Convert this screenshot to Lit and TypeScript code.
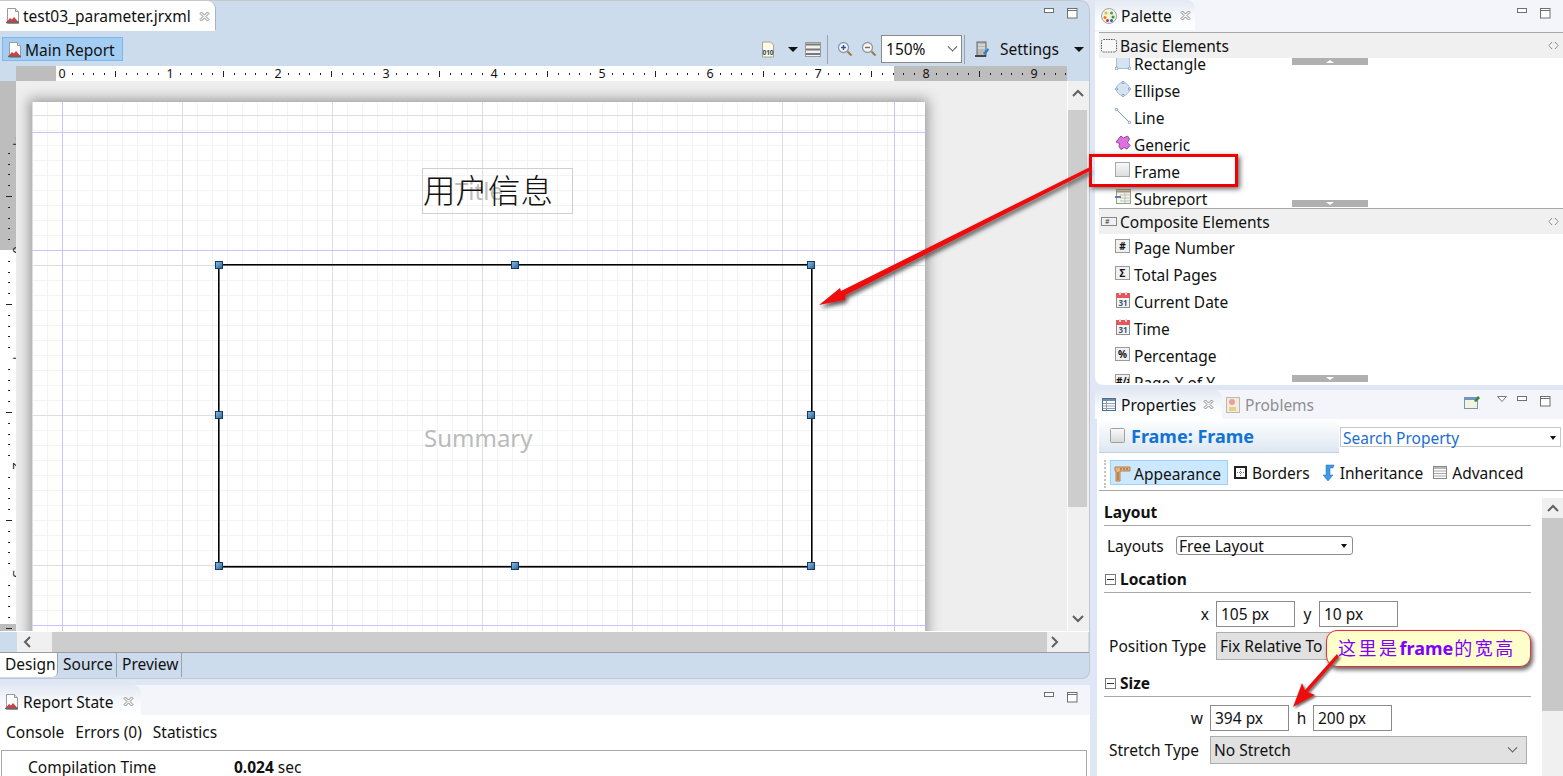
import { LitElement, css, html, svg } from 'lit';
import { customElement } from 'lit/decorators.js';

const reportIcon = () => html`<svg class="ic" width="16" height="18" viewBox="0 0 16 18">
  <path d="M2.500 1.500h8l3 3v12h-11z" fill="#fdfdfd" stroke="#9a9a9a"/>
  <path d="M10.500 1.500v3h3" fill="#ddd" stroke="#9a9a9a"/>
  <path d="M1.500 15l3.500-4 2 1.500 2-2.500 4.500 5z" fill="#c8424a"/>
  <path d="M1 15.500h13" stroke="#666" stroke-width="1.400"/>
</svg>`;

const closeIcon = () => html`<svg class="ic" width="11" height="11" viewBox="0 0 11 11">
  <path d="M1 2.500L2.500 1 5.500 4 8.500 1 10 2.500 7 5.500 10 8.500 8.500 10 5.500 7 2.500 10 1 8.500 4 5.500z" fill="#f4f4f4" stroke="#8a8a8a"/>
</svg>`;

const minMax = () => html`<div class="minmax">
  <svg width="11" height="6" viewBox="0 0 11 6"><rect x=".5" y=".5" width="9" height="4" fill="#fff" stroke="#6f6f6f"/></svg>
  <svg width="11" height="11" viewBox="0 0 11 11"><rect x=".5" y=".5" width="9.500" height="9.500" fill="#fff" stroke="#6f6f6f"/><path d="M1 2.500h9" stroke="#6f6f6f"/></svg>
</div>`;

const zoomIcon = (plus: boolean) => html`<svg class="ic" width="16" height="16" viewBox="0 0 16 16">
  <circle cx="6.500" cy="6.500" r="5" fill="#f2f6fa" stroke="#8e9aa5" stroke-width="1.300"/>
  <path d="M10.500 10.500l4 4" stroke="#9c7a4c" stroke-width="2"/>
  <path d=${plus ? 'M4 6.500h5M6.500 4v5' : 'M4 6.500h5'} stroke=${plus ? '#2e52a8' : '#a3602e'} stroke-width="1.400"/>
</svg>`;

const rulerH = () => {
  const parts = [];
  for (let n = 0; n < 10; n++) {
    const x0 = 45 + n * 108;
    for (let t = 1; t < 10; t++) {
      const x = Math.round(x0 + t * 10.8) + 0.5;
      parts.push(t === 5
        ? svg`<path d="M${x} 5v6" stroke="#222"/>`
        : svg`<path d="M${x} 7v2" stroke="#222"/>`);
    }
    parts.push(svg`<rect x=${x0 - 5} y="0" width="11" height="15" fill=${n > 7 ? 'none' : '#fff'}/>`);
    parts.push(svg`<text x=${x0 + 1} y="11.500" text-anchor="middle" font-size="12.500" fill="#111">${n}</text>`);
  }
  return parts;
};

const rulerV = () => {
  const parts = [];
  for (let n = -1; n < 4; n++) {
    const y0 = 169 + n * 108;
    for (let t = 1; t < 10; t++) {
      const y = Math.round(y0 + t * 10.8) + 0.5;
      parts.push(t === 5
        ? svg`<path d="M6 ${y}h6" stroke="#222"/>`
        : svg`<path d="M8 ${y}h2" stroke="#222"/>`);
    }
    parts.push(svg`<text transform="translate(13 ${y0}) rotate(90)" text-anchor="middle" font-size="13" fill="#223">${n}</text>`);
  }
  return parts;
};

const paletteBasic = [
  { name: 'Rectangle', icon: 'rect' },
  { name: 'Ellipse', icon: 'ellipse' },
  { name: 'Line', icon: 'line' },
  { name: 'Generic', icon: 'generic' },
  { name: 'Frame', icon: 'frame' },
  { name: 'Subreport', icon: 'sub' },
];

const paletteComposite = [
  { name: 'Page Number', icon: '#' },
  { name: 'Total Pages', icon: 'Σ' },
  { name: 'Current Date', icon: 'cal' },
  { name: 'Time', icon: 'cal' },
  { name: 'Percentage', icon: '%' },
  { name: 'Page X of Y', icon: '#/#' },
];

const palIcon = (k: string) => {
  switch (k) {
    case 'rect':
      return html`<svg width="16" height="16" viewBox="0 0 16 16"><rect x="1.500" y="1.500" width="13" height="13" fill="#d6e3f2" stroke="#a9bfd8"/><circle cx="1.500" cy="14.500" r="1.300" fill="#fff" stroke="#7a99bd"/><circle cx="14.500" cy="14.500" r="1.300" fill="#fff" stroke="#7a99bd"/></svg>`;
    case 'ellipse':
      return html`<svg width="16" height="16" viewBox="0 0 16 16"><circle cx="8" cy="8" r="6.500" fill="#d6e3f2" stroke="#a9bfd8"/><circle cx="8" cy="1.500" r="1.100" fill="#fff" stroke="#7a99bd"/><circle cx="1.500" cy="8" r="1.100" fill="#fff" stroke="#7a99bd"/><circle cx="14.500" cy="8" r="1.100" fill="#fff" stroke="#7a99bd"/><circle cx="8" cy="14.500" r="1.100" fill="#fff" stroke="#7a99bd"/></svg>`;
    case 'line':
      return html`<svg width="16" height="16" viewBox="0 0 16 16"><path d="M1.500 1.500l13 13" stroke="#7a99bd"/><circle cx="1.500" cy="1.500" r="1.200" fill="#fff" stroke="#7a99bd"/><circle cx="14.500" cy="14.500" r="1.200" fill="#fff" stroke="#7a99bd"/></svg>`;
    case 'generic':
      return html`<svg width="16" height="16" viewBox="0 0 16 16"><path d="M6 1l2.500 2 4-2 2 3-2 3.500 2.500 3-3 3.500-3-1.500-3 2-2-3 .5-3L1 7l2-2.500z" fill="#e070e0" stroke="#8a4d8a"/></svg>`;
    case 'frame':
      return html`<svg width="16" height="16" viewBox="0 0 16 16"><defs><linearGradient id="fg" x1="0" y1="0" x2="0" y2="1"><stop offset="0" stop-color="#fafafa"/><stop offset="1" stop-color="#dcdcdc"/></linearGradient></defs><rect x=".5" y=".5" width="14" height="14" fill="url(#fg)" stroke="#a8a8a8"/></svg>`;
    case 'sub':
      return html`<svg width="16" height="16" viewBox="0 0 16 16"><rect x="1.500" y=".5" width="14" height="14" fill="#f6f6ee" stroke="#8fa08f"/><path d="M2 2.500h13" stroke="#b39a70" stroke-width="2"/><path d="M5 6h10M5 9h10M5 12h10M10 4v10" stroke="#b9c4b9"/><path d="M0 8h6" stroke="#5c7fa8" stroke-width="2"/></svg>`;
    case 'cal':
      return html`<svg width="16" height="17" viewBox="0 0 16 17"><rect x="1.500" y="1.500" width="13" height="14" fill="#f4f4f4" stroke="#8c8c8c"/><rect x="1" y="1" width="14" height="5" fill="#e8545a"/><rect x="4" y="0" width="2" height="3" fill="#ddd"/><rect x="10" y="0" width="2" height="3" fill="#ddd"/><text x="8" y="14" text-anchor="middle" font-size="8" font-weight="700" fill="#39566e">31</text></svg>`;
    default:
      return html`<span class="keyicon">${k}</span>`;
  }
};

@customElement('app-root')
export class AppRoot extends LitElement {
  static styles = css`
    :host {
      display: flex;
      width: 1563px;
      height: 776px;
      overflow: hidden;
      position: relative;
      background: #dfe6f5;
      font-family: 'Noto Sans', 'Noto Sans CJK SC', sans-serif;
      font-size: 15.500px;
      color: #111;
      line-height: 20px;
    }
    .ic { flex: none; display: block; }
    svg text { font-family: 'Noto Sans', sans-serif; }

    .left { width: 1090px; flex: none; display: flex; flex-direction: column; }
    .right { width: 466px; margin-left: 7px; flex: none; display: flex; flex-direction: column; }

    /* editor */
    .editor {
      height: 679px;
      flex: none;
      background: #cddcec;
      border-top: 1px solid #c4c8cc;
      border-right: 1px solid #c2c6cc;
      border-bottom: 1px solid #c2c6cc;
      border-radius: 0 10px 8px 0;
      display: flex;
      flex-direction: column;
      box-sizing: border-box;
    }
    .tabbar { height: 31px; flex: none; display: flex; align-items: flex-start; position: relative; }
    .editor-tab {
      width: 216px;
      height: 30px;
      background: #fff;
      border-right: 1px solid #a9b5c2;
      border-bottom: 1px solid #fff;
      border-radius: 0 8px 0 0;
      box-sizing: border-box;
      display: flex;
      align-items: center;
      padding: 1px 0 0 5px;
      gap: 2px;
    }
    .editor-tab .ic:last-child { margin-left: 6px; }
    .tabbar .minmax { margin-left: auto; margin-right: 11px; margin-top: 7px; }
    .minmax { display: flex; align-items: flex-start; gap: 12px; }

    .toolbar { height: 34px; flex: none; display: flex; align-items: center; position: relative; }
    .main-btn {
      margin-left: 2px;
      width: 121px;
      height: 24px;
      background: #a3cdf3;
      border: 1px solid #7ab8ee;
      box-sizing: border-box;
      display: flex;
      align-items: center;
      padding: 1px 0 0 4px;
      gap: 2px;
    }
    .tools { margin-left: auto; display: flex; align-items: center; height: 100%; padding-right: 4px; }
    .sep { width: 1px; height: 29px; background: #9aa3ad; }
    .sp { display: block; flex: none; }
    .ddrop { display: block; width: 0; height: 0; border: 5px solid transparent; border-top: 5px solid #111; border-bottom: 0; }
    .combo150 {
      width: 81px;
      height: 28px;
      box-sizing: border-box;
      background: #fff;
      border: 1px solid #8a8a8a;
      display: flex;
      align-items: center;
      padding: 0 5px 0 4px;
      justify-content: space-between;
    }
    .chev { width: 6px; height: 6px; border-right: 1px solid #555; border-bottom: 1px solid #555; transform: rotate(45deg) translate(-2px, -2px); }

    .ruler-row { height: 15px; flex: none; display: flex; }
    .ruler-row svg { display: block; margin-left: 16px; background: #fff; }

    .work { flex: 1; min-height: 0; display: flex; }
    .vruler { width: 16px; flex: none; background: #fff; }
    .vruler svg { display: block; }
    .canvas { width: 1051px; flex: none; position: relative; overflow: hidden; background: #eeeeee; }
    .page {
      position: absolute;
      left: 16px;
      top: 21px;
      width: 893px;
      height: 560px;
      box-shadow: 0 0 12px 3px #9a9a9a;
      background-color: #fff;
      background-image:
        linear-gradient(#c4c4ff, #c4c4ff), linear-gradient(#c4c4ff, #c4c4ff),
        linear-gradient(#c4c4ff, #c4c4ff), linear-gradient(#c4c4ff, #c4c4ff),
        linear-gradient(#c4c4ff, #c4c4ff),
        linear-gradient(90deg, #dedede 1px, transparent 1px),
        linear-gradient(#dedede 1px, transparent 1px),
        linear-gradient(90deg, #f3f3f3 1px, transparent 1px),
        linear-gradient(#f3f3f3 1px, transparent 1px);
      background-size: 1px 100%, 1px 100%, 100% 1px, 100% 1px, 100% 1px, 150px 100%, 100% 150px, 15px 100%, 100% 15px;
      background-position: 30px 0, 862px 0, 0 30px, 0 148px, 0 523px, 0 0, 0 13px, 0 0, 0 13px;
      background-repeat: no-repeat, no-repeat, no-repeat, no-repeat, no-repeat, repeat-x, repeat-y, repeat-x, repeat-y;
    }
    .title-box {
      position: absolute;
      left: 390px;
      top: 66px;
      width: 151px;
      height: 46px;
      border: 1px solid #cfcfcf;
      box-sizing: border-box;
    }
    .title-ghost { position: absolute; left: 32px; top: 6px; font-size: 24px; line-height: 32px; color: #bdbdbd; }
    .title-cn {
      position: absolute;
      left: 0;
      top: -2px;
      font-size: 32.500px;
      line-height: 44px;
      color: #111;
      font-weight: 300;
      font-family: 'Noto Sans CJK SC', sans-serif;
      white-space: nowrap;
    }
    .summary { position: absolute; left: 392px; top: 320px; font-size: 24px; line-height: 32px; color: #bbb; }
    .frame-el {
      position: absolute;
      left: 186px;
      top: 162px;
      width: 594px;
      height: 303px;
      box-sizing: border-box;
      border: 1px solid #000;
      box-shadow: inset 1px 1px 0 #666, 1px 1px 0 #666;
    }
    .handle {
      position: absolute;
      width: 8px;
      height: 8px;
      margin: -4px 0 0 -4px;
      box-sizing: border-box;
      border: 1px solid #123a63;
      background: linear-gradient(135deg, #8cb6dc, #2d6aa2);
    }

    .vscroll { flex: 1; background: #f0f0f0; border-left: 1px solid #fff; display: flex; flex-direction: column; align-items: center; padding-right: 2px; box-sizing: border-box; }
    .arrow-box { height: 24px; flex: none; display: flex; align-items: center; justify-content: center; width: 100%; }
    .vthumb { width: 100%; height: 397px; flex: none; margin-top: 5px; background: #cdcdcd; }
    .vscroll .arrow-box.end { margin-top: auto; }
    .hscroll { height: 20px; flex: none; display: flex; border-top: 1px solid #fff; }
    .hscroll .cap { width: 35px; margin-left: 17px; background: #f0f0f0; display: flex; align-items: center; padding-left: 6px; box-sizing: border-box; }
    .hthumb { width: 995px; background: #cdcdcd; }
    .hscroll .cap2 { width: 41px; background: #f0f0f0; display: flex; align-items: center; padding-left: 4px; box-sizing: border-box; }
    .bottom-tabs { height: 25px; flex: none; display: flex; border-top: 1px solid #9c9c9c; }
    .bottom-tabs div { height: 24px; line-height: 23px; border-right: 1px solid #9aa3ad; box-sizing: border-box; padding-left: 5px; }
    .bottom-tabs .on { background: #fff; border-radius: 0 0 5px 0; width: 58px; }
    .bottom-tabs .src { width: 59px; }
    .bottom-tabs .pre { width: 65px; }

    /* bottom view */
    .report { margin-top: 6px; flex: 1; min-height: 0; background: #fff; display: flex; flex-direction: column; }
    .view-bar { flex: none; display: flex; background: #f3f5fb; }
    .view-tab {
      background: linear-gradient(#e3e9f2, #f8fafd 60%, #fff);
      border-radius: 0 8px 0 0;
      display: flex;
      align-items: center;
      box-sizing: border-box;
    }
    .report .view-tab { width: 141px; height: 30px; padding: 3px 0 0 4px; gap: 3px; }
    .report .view-tab .ic:last-child { margin-left: 7px; }
    .report .view-bar { height: 30px; padding-right: 12px; }
    .report .view-bar .minmax { margin-left: auto; margin-top: 7px; }
    .report-links { height: 35px; flex: none; display: flex; gap: 11px; padding: 0 0 2px 6px; align-items: center; box-sizing: border-box; }
    .stats { margin: 0 1px; flex: 1; border: 1px solid #aaa; border-bottom: 0; width: 1086px; box-sizing: border-box; display: flex; padding: 6px 0 0 26px; }
    .stats b { margin-left: 77px; font-weight: 700; }
    .stats span { width: 129px; white-space: nowrap; }
    .stats i { font-style: normal; margin-left: 4px; }

    /* palette */
    .palette { height: 385px; flex: none; display: flex; flex-direction: column; background: #fff; border-radius: 0 0 0 8px; margin-left: -2px; padding-left: 2px; box-sizing: border-box; }
    .palette .view-bar { height: 32px; padding-right: 12px; margin-left: -2px; }
    .palette .view-tab { width: 100px; height: 30px; padding: 1px 0 0 6px; gap: 4px; }
    .palette .view-tab .ic:last-child { margin-left: 4px; }
    .palette .view-bar .minmax { margin-left: auto; margin-top: 8px; }
    .drawer-head {
      height: 26px;
      flex: none;
      margin-left: 2px;
      background: #f0f0f0;
      border-top: 1px solid #a8a8a8;
      box-sizing: border-box;
      display: flex;
      align-items: center;
      padding: 0 0 0 2px;
      gap: 3px;
      white-space: nowrap;
    }
    .drawer-head .pin { margin-left: auto; margin-right: 4px; }
    .drawer-list { position: relative; overflow: hidden; flex: none; padding-left: 18px; }
    .drawer-list.basic { height: 149px; margin-bottom: 1px; }
    .drawer-list.basic .rows { margin-top: -8px; }
    .drawer-list.comp { height: 149px; }
    .p-row { height: 27px; display: flex; align-items: center; gap: 3px; position: relative; }
    .p-icon { width: 16px; height: 17px; flex: none; display: flex; align-items: center; margin-top: -3px; }
    .keyicon {
      display: block;
      width: 15px;
      height: 14px;
      box-sizing: border-box;
      border: 1px solid #9a9a9a;
      background: #f1f1f1;
      font-size: 10px;
      line-height: 12px;
      text-align: center;
      font-weight: 700;
      overflow: hidden;
      white-space: nowrap;
    }
    .scroller { position: absolute; left: 195px; width: 76px; height: 7px; background: #b0b0b0; display: flex; justify-content: center; align-items: center; }
    .scroller.top { top: 0; }
    .scroller.bot { bottom: 0; }
    .drawer-list.comp .scroller.bot { bottom: 1px; }
    .tri-up { width: 0; height: 0; border: 4px solid transparent; border-bottom: 3px solid #fff; border-top: 0; }
    .tri-down { width: 0; height: 0; border: 4px solid transparent; border-top: 3px solid #fff; border-bottom: 0; }

    /* properties */
    .props { margin-top: 5px; flex: 1; min-height: 0; display: flex; flex-direction: column; position: relative; background: #fff; }
    .props .view-bar { height: 29px; align-items: flex-start; margin-left: -2px; padding-right: 12px; }
    .props .view-tab { width: 127px; height: 29px; padding-left: 7px; gap: 5px; }
    .props .view-tab .ic:last-child { margin-left: 2px; }
    .props .tab2 { display: flex; align-items: center; height: 29px; gap: 5px; color: #8e8e8e; padding-left: 4px; }
    .view-actions { margin-left: auto; display: flex; gap: 13px; align-items: flex-start; margin-top: 6px; }
    .view-actions .pin { margin-top: -1px; margin-right: 3px; }
    .view-actions .tri { margin-right: -3px; }
    .prop-head { height: 34px; flex: none; display: flex; }
    .prop-title {
      width: 240px;
      margin-left: 2px;
      flex: none;
      box-sizing: border-box;
      border-bottom: 1px solid #c3d0de;
      background: linear-gradient(#fff, #dde7f1);
      display: flex;
      align-items: center;
      padding-left: 11px;
      gap: 6px;
      font-size: 18px;
      font-weight: 700;
      color: #1273d6;
    }
    .search {
      margin: 8px 2px 0 1px;
      flex: 1;
      height: 20px;
      box-sizing: border-box;
      border: 1px solid #c8c8c8;
      color: #1c6fce;
      display: flex;
      align-items: center;
      justify-content: space-between;
      padding: 1px 4px 0 2px;
    }
    .sdrop { display: block; width: 0; height: 0; border: 3.500px solid transparent; border-top: 4px solid #111; border-bottom: 0; }
    .prop-tabs {
      height: 38px;
      flex: none;
      margin-left: 2px;
      border-bottom: 1px solid #a8a8a8;
      box-sizing: border-box;
      display: flex;
      align-items: center;
      padding-left: 5px;
      gap: 5px;
    }
    .gripper { width: 0; height: 28px; margin-right: -1px; border-left: 2px dotted #c4c4c4; margin-top: 4px; }
    .prop-tab { display: flex; align-items: center; gap: 5px; margin-right: 8px; margin-top: 2px; }
    .prop-tab.on {
      background: #cce8ff;
      border: 1px solid #99d1ff;
      height: 25px;
      width: 118px;
      padding: 3px 0 0 3px;
      gap: 3px;
      box-sizing: border-box;
      margin: 2px 1px 0 0;
    }
    .prop-tab.inh { margin-right: 5px; }
    .prop-body { flex: 1; min-height: 0; display: flex; }
    .form { width: 445px; flex: none; padding: 0 0 0 7px; box-sizing: border-box; }
    .sec { font-weight: 700; display: flex; align-items: center; gap: 4px; border-bottom: 1px solid #a8a8a8; height: 23px; width: 427px; box-sizing: border-box; padding-bottom: 4px; }
    .sec.plain { margin-top: 11px; height: 24px; }
    .sec-gap { margin-top: 15px; }
    .sec-size { margin-top: 14px; }
    .box { width: 9px; height: 9px; border: 1px solid #777; position: relative; flex: none; margin-left: 1px; }
    .box::after { content: ''; position: absolute; left: 1px; right: 1px; top: 4px; height: 1px; background: #333; }
    .f-row { display: flex; align-items: center; }
    .layouts { height: 19px; margin-top: 10px; padding-left: 3px; }
    .layouts label { width: 69px; }
    .small-select {
      width: 177px;
      height: 19px;
      box-sizing: border-box;
      border: 1px solid #8e8e8e;
      border-radius: 3px;
      display: flex;
      align-items: center;
      justify-content: space-between;
      padding: 0 5px 0 2px;
    }
    .xy { height: 26px; margin-top: 8px; }
    .xy label { text-align: right; flex: none; }
    .xy.loc > label:first-child { width: 105px; }
    .xy.dim > label:first-child { width: 99px; }
    .input {
      width: 79px;
      height: 26px;
      box-sizing: border-box;
      border: 1px solid #8a8a8a;
      padding-left: 4px;
      line-height: 25px;
      margin-left: 7px;
      background: #fff;
    }
    .xy label.second { width: 24px; text-align: center; margin-left: 0; padding-left: 1px; box-sizing: border-box; }
    .xy label.second + .input { margin-left: 0; }
    .sel-row { height: 28px; margin-top: 5px; padding-left: 5px; }
    .sel-row label { flex: none; }
    .sel {
      height: 28px;
      box-sizing: border-box;
      background: #e1e1e1;
      border: 1px solid #adadad;
      display: flex;
      align-items: center;
      justify-content: space-between;
      padding: 0 10px 0 3px;
      white-space: nowrap;
      overflow: hidden;
    }
    .pos label { width: 107px; }
    .pos .sel { width: 205px; }
    .stretch label { width: 101px; }
    .stretch .sel { width: 317px; }
    .pscroll { width: 21px; flex: none; margin-left: 0; background: #f0f0f0; margin-top: 7px; display: flex; flex-direction: column; }
    .pscroll .arrow-box { height: 20px; }
    .pthumb { height: 193px; background: #c8c8c8; }

    /* overlays */
    .overlay { position: absolute; left: 0; top: 0; width: 1563px; height: 776px; pointer-events: none; }
    .redbox {
      position: absolute;
      left: 1089px;
      top: 154px;
      width: 149px;
      height: 33px;
      box-sizing: border-box;
      border: 3px solid #f00000;
      box-shadow: 2px 2px 5px #666;
    }
    .callout {
      position: absolute;
      left: 1326px;
      top: 630px;
      width: 205px;
      height: 37px;
      box-sizing: border-box;
      border: 1px solid #e8303c;
      border-radius: 11px;
      background: #ffffcc;
      box-shadow: 2px 3px 4px #666;
      color: #8000ff;
      font-size: 18px;
      line-height: 33px;
      padding-left: 11px;
      letter-spacing: 2.500px;
      white-space: nowrap;
      font-family: 'Noto Sans CJK SC', 'Noto Sans', sans-serif;
    }
    .callout b { font-weight: 700; letter-spacing: 0; margin-right: 1px; font-family: 'Noto Sans', sans-serif; }
  `;

  render() {
    const handles = [
      [0, 0], [296, 0], [592, 0],
      [0, 150], [592, 150],
      [0, 301], [296, 301], [592, 301],
    ];
    return html`
      <div class="left">
        <div class="editor">
          <div class="tabbar">
            <div class="editor-tab">${reportIcon()}<span>test03_parameter.jrxml</span>${closeIcon()}</div>
            ${minMax()}
          </div>
          <div class="toolbar">
            <div class="main-btn">${reportIcon()}<span>Main Report</span></div>
            <div class="tools">
              <svg class="ic" width="15" height="17" viewBox="0 0 15 17"><path d="M1.500 1h8l3 3v12h-11z" fill="#fdf8e8" stroke="#b0a27a"/><text x="7" y="14" text-anchor="middle" font-size="6.500" font-weight="700" fill="#2a4a6e">010</text></svg>
              <span class="sp" style="width:12px"></span><span class="ddrop"></span><span class="sp" style="width:7px"></span>
              <svg class="ic" width="16" height="15" viewBox="0 0 16 15"><rect x=".5" y=".5" width="15" height="14" fill="#f2f2f2" stroke="#999"/><path d="M1 2.500h14M1 7.500h14M1 12h14" stroke="#777" stroke-width="2"/></svg>
              <span class="sp" style="width:6px"></span><span class="sep"></span><span class="sp" style="width:9px"></span>
              ${zoomIcon(true)}<span class="sp" style="width:8px"></span>${zoomIcon(false)}<span class="sp" style="width:4px"></span>
              <div class="combo150"><span>150%</span><span class="chev"></span></div>
              <span class="sp" style="width:2px"></span><span class="sep"></span><span class="sp" style="width:10px"></span>
              <svg class="ic" width="15" height="17" viewBox="0 0 15 17"><rect x="2" y="1" width="9" height="14" fill="#b9b9b9" stroke="#666"/><path d="M3 4h7M3 7h7" stroke="#eee"/><rect x="0" y="14" width="11" height="2" fill="#444"/><path d="M8 12l5-5 1 2-4 5z" fill="#2b7fd1"/></svg>
              <span class="sp" style="width:10px"></span><span>Settings</span><span class="sp" style="width:15px"></span><span class="ddrop"></span><span class="sp" style="width:1px"></span>
            </div>
          </div>
          <div class="ruler-row">
            <svg width="1051" height="15" viewBox="0 0 1051 15">
              <rect x="0" y="0" width="45" height="15" fill="#bdbdbd"/>
              <rect x="878" y="0" width="173" height="15" fill="#bdbdbd"/>
              ${rulerH()}
            </svg>
          </div>
          <div class="work">
            <div class="vruler">
              <svg width="16" height="551" viewBox="0 0 16 551">
                <rect x="0" y="0" width="16" height="169" fill="#bdbdbd"/>
                <rect x="0" y="543" width="16" height="8" fill="#bdbdbd"/>
                ${rulerV()}
              </svg>
            </div>
            <div class="canvas">
              <div class="page">
                <div class="title-box">
                  <div class="title-ghost">Title</div>
                  <div class="title-cn">用户信息</div>
                </div>
                <div class="summary">Summary</div>
                <div class="frame-el"></div>
                ${handles.map(([x, y]) => html`<div class="handle" style="left:${187 + x}px;top:${163 + y}px"></div>`)}
              </div>
            </div>
            <div class="vscroll">
              <div class="arrow-box"><svg width="12" height="8" viewBox="0 0 12 8"><path d="M1 7l5-5 5 5" fill="none" stroke="#606060" stroke-width="2"/></svg></div>
              <div class="vthumb"></div>
              <div class="arrow-box end"><svg width="12" height="8" viewBox="0 0 12 8"><path d="M1 1l5 5 5-5" fill="none" stroke="#606060" stroke-width="2"/></svg></div>
            </div>
          </div>
          <div class="hscroll">
            <div class="cap"><svg width="8" height="12" viewBox="0 0 8 12"><path d="M7 1L2 6l5 5" fill="none" stroke="#606060" stroke-width="2"/></svg></div>
            <div class="hthumb"></div>
            <div class="cap2"><svg width="8" height="12" viewBox="0 0 8 12"><path d="M1 1l5 5-5 5" fill="none" stroke="#606060" stroke-width="2"/></svg></div>
          </div>
          <div class="bottom-tabs">
            <div class="on">Design</div><div class="src">Source</div><div class="pre">Preview</div>
          </div>
        </div>
        <div class="report">
          <div class="view-bar">
            <div class="view-tab">${reportIcon()}<span>Report State</span>${closeIcon()}</div>
            ${minMax()}
          </div>
          <div class="report-links"><span>Console</span><span>Errors (0)</span><span>Statistics</span></div>
          <div class="stats"><span>Compilation Time</span><b>0.024</b><i>sec</i></div>
        </div>
      </div>

      <div class="right">
        <div class="palette">
          <div class="view-bar">
            <div class="view-tab">
              <svg class="ic" width="16" height="16" viewBox="0 0 16 16"><circle cx="8" cy="8" r="7.500" fill="#f4f0e0" stroke="#9aa5b5"/><circle cx="5" cy="5" r="1.500" fill="#e8c01c"/><circle cx="10.500" cy="5" r="1.500" fill="#3da83d"/><circle cx="4" cy="9.500" r="1.500" fill="#e07a1c"/><circle cx="12" cy="9" r="1.500" fill="#2aa02a"/><circle cx="6.500" cy="12.500" r="1.500" fill="#d0302c"/><circle cx="10.500" cy="12.500" r="1.500" fill="#2860c8"/></svg>
              <span>Palette</span>${closeIcon()}
            </div>
            ${minMax()}
          </div>
          <div class="drawer-head">
            <svg class="ic" width="16" height="14" viewBox="0 0 16 14"><rect x=".5" y=".5" width="15" height="12.500" rx="2" fill="#f8f8f8" stroke="#555" stroke-dasharray="1.500 1"/></svg>
            <span>Basic Elements</span>
            <svg class="ic pin" width="11" height="9" viewBox="0 0 11 9"><path d="M4 1L1 4.500 4 8M7 1l3 3.500L7 8" fill="#fff" stroke="#888"/></svg>
          </div>
          <div class="drawer-list basic">
            <div class="rows">
              ${paletteBasic.map(i => html`<div class="p-row"><span class="p-icon">${palIcon(i.icon)}</span><span>${i.name}</span></div>`)}
            </div>
            <div class="scroller top"><span class="tri-up"></span></div>
            <div class="scroller bot"><span class="tri-down"></span></div>
          </div>
          <div class="drawer-head">
            <svg class="ic" width="16" height="9" viewBox="0 0 16 9"><rect x=".5" y=".5" width="15" height="8" fill="#f0f0f0" stroke="#888"/><text x="4" y="7" font-size="7" fill="#333">#</text></svg>
            <span>Composite Elements</span>
            <svg class="ic pin" width="11" height="9" viewBox="0 0 11 9"><path d="M4 1L1 4.500 4 8M7 1l3 3.500L7 8" fill="#fff" stroke="#888"/></svg>
          </div>
          <div class="drawer-list comp">
            <div class="rows">
              ${paletteComposite.map(i => html`<div class="p-row"><span class="p-icon">${palIcon(i.icon)}</span><span>${i.name}</span></div>`)}
            </div>
            <div class="scroller bot"><span class="tri-down"></span></div>
          </div>
        </div>

        <div class="props">
          <div class="view-bar">
            <div class="view-tab">
              <svg class="ic" width="14" height="13" viewBox="0 0 14 13"><rect x=".5" y=".5" width="13" height="12" fill="#fff" stroke="#51708f"/><rect x="1" y="1" width="12" height="2" fill="#6f8daa"/><path d="M1 5.500h12M1 8h12M1 10.500h12M4.500 3v9" stroke="#8aa2ba"/></svg>
              <span>Properties</span>${closeIcon()}
            </div>
            <div class="tab2">
              <svg class="ic" width="14" height="16" viewBox="0 0 14 16"><rect x=".5" y=".5" width="13" height="15" fill="#f3ecdc" stroke="#bfb8a8"/><circle cx="6" cy="5" r="3" fill="#e5a0a0"/><rect x="3" y="10" width="7" height="4" fill="#e5cf90"/></svg>
              <span>Problems</span>
            </div>
            <div class="view-actions">
              <svg class="ic pin" width="17" height="14" viewBox="0 0 17 14"><rect x=".5" y="2.500" width="13" height="11" fill="#f3f3e4" stroke="#7d95ad"/><rect x="1" y="3" width="12" height="2" fill="#6d97c2"/><path d="M10 6l4-5 2 2-4 4z" fill="#2f8a3c"/></svg>
              <svg class="ic tri" width="10" height="6" viewBox="0 0 10 6"><path d="M.5.5h9L5 5.500z" fill="#fff" stroke="#777"/></svg>
              ${minMax()}
            </div>
          </div>
          <div class="prop-head">
            <div class="prop-title">
              <svg class="ic" width="15" height="15" viewBox="0 0 15 15"><defs><linearGradient id="fh" x1="0" y1="0" x2="0" y2="1"><stop offset="0" stop-color="#fafafa"/><stop offset="1" stop-color="#d8d8d8"/></linearGradient></defs><rect x=".5" y=".5" width="14" height="14" rx="1" fill="url(#fh)" stroke="#a0a0a0"/></svg>
              <span>Frame: Frame</span>
            </div>
            <div class="search"><span>Search Property</span><span class="sdrop"></span></div>
          </div>
          <div class="prop-tabs">
            <span class="gripper"></span>
            <div class="prop-tab on">
              <svg class="ic" width="17" height="16" viewBox="0 0 17 16"><path d="M1 1h15v4H6v10H2V5H1z" fill="#e9b27e" stroke="#b5804c"/><path d="M4 6v8M7 2v2M10 2v2M13 2v2" stroke="#8a5a28"/></svg>
              <span>Appearance</span>
            </div>
            <div class="prop-tab">
              <svg class="ic" width="13" height="13" viewBox="0 0 13 13"><rect x="1" y="1" width="11" height="11" fill="#fff" stroke="#222" stroke-width="2"/><path d="M6.500 3v7M3 6.500h7" stroke="#777" stroke-dasharray="1 1"/></svg>
              <span>Borders</span>
            </div>
            <div class="prop-tab inh">
              <svg class="ic" width="12" height="18" viewBox="0 0 12 18"><path d="M3 1h8l-1 3H7v7h3l-5 6-5-6h3z" fill="#3f98e8" stroke="#2a70b0" stroke-width=".5"/></svg>
              <span>Inheritance</span>
            </div>
            <div class="prop-tab">
              <svg class="ic" width="14" height="13" viewBox="0 0 14 13"><rect x=".5" y=".5" width="13" height="12" fill="#fff" stroke="#8a8a8a"/><rect x="1" y="1" width="12" height="2" fill="#b8b8b8"/><path d="M1 5h12M1 7.500h12M1 10h12" stroke="#a8a8a8"/></svg>
              <span>Advanced</span>
            </div>
          </div>
          <div class="prop-body">
            <div class="form">
              <div class="sec plain">Layout</div>
              <div class="f-row layouts"><label>Layouts</label><div class="small-select"><span>Free Layout</span><span class="sdrop"></span></div></div>
              <div class="sec sec-gap"><span class="box"></span>Location</div>
              <div class="f-row xy loc"><label>x</label><div class="input">105 px</div><label class="second">y</label><div class="input">10 px</div></div>
              <div class="f-row sel-row pos"><label>Position Type</label><div class="sel"><span>Fix Relative To Top</span></div></div>
              <div class="sec sec-size"><span class="box"></span>Size</div>
              <div class="f-row xy dim"><label>w</label><div class="input">394 px</div><label class="second">h</label><div class="input">200 px</div></div>
              <div class="f-row sel-row stretch"><label>Stretch Type</label><div class="sel"><span>No Stretch</span><span class="chev"></span></div></div>
            </div>
            <div class="pscroll">
              <div class="arrow-box"><svg width="12" height="8" viewBox="0 0 12 8"><path d="M1 7l5-5 5 5" fill="none" stroke="#606060" stroke-width="2"/></svg></div>
              <div class="pthumb"></div>
            </div>
          </div>
        </div>
      </div>

      <div class="redbox"></div>
      <svg class="overlay" viewBox="0 0 1563 776">
        <defs>
          <filter id="sh" x="-10%" y="-10%" width="120%" height="130%"><feDropShadow dx="1.500" dy="3" stdDeviation="2" flood-color="#555"/></filter>
          <filter id="sh2" x="-30%" y="-30%" width="160%" height="160%"><feDropShadow dx="1.500" dy="1.500" stdDeviation="1" flood-color="#666"/></filter>
        </defs>
        <path d="M1090 167L841 291 840 288 819 305 845 300 846 295 1090 171z" fill="#ee0f0f" filter="url(#sh)"/>
      </svg>
      <div class="callout">这里是<b>frame</b>的宽高</div>
      <svg class="overlay" viewBox="0 0 1563 776">
        <path d="M1337 654L1305 690 1302 683 1293 707 1315 695 1308 692 1339 657z" fill="#ee0f0f" filter="url(#sh2)"/>
      </svg>
    `;
  }
}
